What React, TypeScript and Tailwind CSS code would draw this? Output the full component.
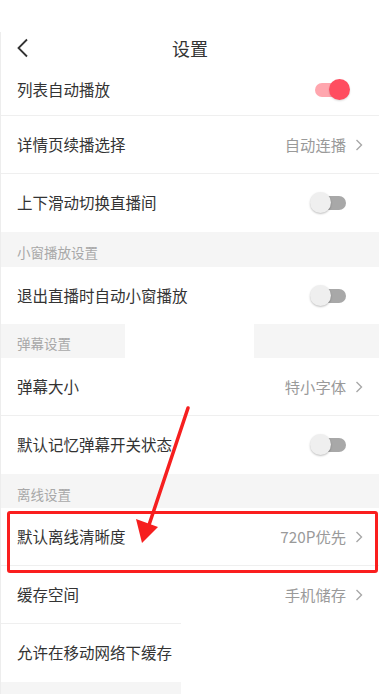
import React from "react";

const font = { fontFamily: '"Noto Sans CJK SC", "Noto Sans", sans-serif' };

function Chevron() {
  return (
    <svg width="8" height="12" viewBox="0 0 8 12" className="ml-[9px]">
      <path d="M1.5 1 L6.5 6 L1.5 11" fill="none" stroke="#a8a8a8" strokeWidth="1.4" />
    </svg>
  );
}

function ToggleOn() {
  return (
    <div className="relative w-[36px] h-[22px] mr-[28px]">
      <div className="absolute left-0 top-[4px] w-[28px] h-[14px] rounded-full bg-[#ffa6ae]" />
      <div className="absolute left-[14px] top-0 w-[21px] h-[21px] rounded-full bg-[#ff4d60] shadow-[0_1px_2px_rgba(0,0,0,0.15)]" />
    </div>
  );
}

function ToggleOff() {
  return (
    <div className="relative w-[37px] h-[22px] mr-[32px]">
      <div className="absolute left-[8px] top-[4px] w-[28px] h-[14px] rounded-full bg-[#a8a8a8]" />
      <div className="absolute left-0 top-0 w-[21px] h-[21px] rounded-full bg-[#efefef] shadow-[0_1px_2px_rgba(0,0,0,0.25)]" />
    </div>
  );
}

function Row({
  label,
  value,
  toggle,
  h = "h-[58px]",
  divider = true,
}: {
  label: string;
  value?: string;
  toggle?: "on" | "off";
  h?: string;
  divider?: boolean;
}) {
  return (
    <div className={`flex items-center justify-between pl-[16px] ${h} ${divider ? "border-b border-[#efefef]" : ""}`}>
      <span className="text-[15.5px] text-[#333]">{label}</span>
      {value && (
        <div className="flex items-center pr-[16px]">
          <span className="text-[15.3px] text-[#9a9a9a]">{value}</span>
          <Chevron />
        </div>
      )}
      {toggle === "on" && <ToggleOn />}
      {toggle === "off" && <ToggleOff />}
    </div>
  );
}

function Section({ label, h = "h-[35px]", pt = "pt-[7px]" }: { label: string; h?: string; pt?: string }) {
  return (
    <div className={`${h} ${pt} pl-[16px] bg-[#f5f5f5]`}>
      <span className="text-[13.5px] text-[#a8a8a8] leading-[20px]">{label}</span>
    </div>
  );
}

export default function App() {
  return (
    <div className="relative w-[379px] h-[694px] overflow-hidden bg-white" style={font}>
      <div className="h-[32px] bg-white" />
      <div className="border-l border-[#ededed]">
        <div className="relative h-[32px] flex items-center justify-center">
          <svg width="13" height="20" viewBox="0 0 13 20" className="absolute left-[15px] top-[6px]">
            <path d="M11 1.5 L2.5 10 L11 18.5" fill="none" stroke="#333" strokeWidth="1.8" />
          </svg>
          <span className="text-[18px] text-[#333]">设置</span>
        </div>
        <Row label="列表自动播放" toggle="on" h="h-[52px]" />
        <Row label="详情页续播选择" value="自动连播" h="h-[58px]" />
        <Row label="上下滑动切换直播间" toggle="off" h="h-[58px]" divider={false} />
        <Section label="小窗播放设置" />
        <Row label="退出直播时自动小窗播放" toggle="off" h="h-[57px]" divider={false} />
        <div className="flex h-[34px]">
          <div className="w-[124px] bg-[#f5f5f5] pl-[16px] pt-[6px]">
            <span className="text-[13.5px] text-[#a8a8a8] leading-[20px]">弹幕设置</span>
          </div>
          <div className="w-[129px] bg-white" />
          <div className="flex-1 bg-[#f5f5f5]" />
        </div>
        <Row label="弹幕大小" value="特小字体" h="h-[58px]" />
        <Row label="默认记忆弹幕开关状态" toggle="off" h="h-[58px]" divider={false} />
        <Section label="离线设置" h="h-[34px]" pt="pt-[7px]" />
        <Row label="默认离线清晰度" value="720P优先" h="h-[58px]" />
        <Row label="缓存空间" value="手机储存" h="h-[57px]" divider={false} />
        <div className="w-[180px] h-px bg-[#efefef]" />
        <Row label="允许在移动网络下缓存" h="h-[58px]" divider={false} />
        <div className="w-[180px] h-[12px] bg-[#f5f5f5]" />
      </div>

      <div className="absolute left-[7px] top-[511px] w-[371px] h-[62px] border-[3px] border-[#fa1e1e] rounded-[3px] pointer-events-none" />

      <svg className="absolute left-0 top-0 pointer-events-none" width="379" height="694" viewBox="0 0 379 694">
        <line x1="188" y1="408" x2="148" y2="528" stroke="#f61f1f" strokeWidth="3.5" strokeLinecap="round" />
        <polygon points="142,543 136,519 158,527" fill="#f61f1f" />
      </svg>
    </div>
  );
}
